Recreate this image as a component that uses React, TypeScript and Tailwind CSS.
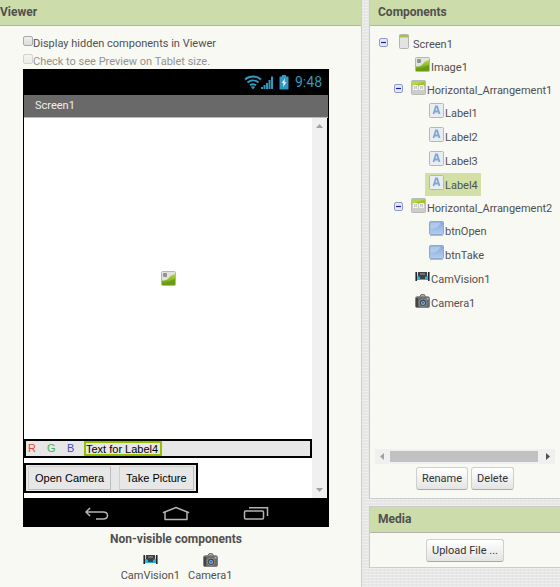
import type { ReactNode } from "react";

const LINEN =
  "bg-[#e7e7e7] bg-[repeating-linear-gradient(0deg,rgba(255,255,255,0.35)_0_1px,transparent_1px_3px),repeating-linear-gradient(90deg,rgba(0,0,0,0.02)_0_1px,transparent_1px_4px)]";

function ScreenIcon() {
  return (
    <svg width="10" height="15" viewBox="0 0 10 15" className="shrink-0">
      <rect x="0.5" y="0.5" width="9" height="14" rx="1" fill="#e3e3e3" stroke="#b4b4b4" />
      <path d="M0.5 1h9v2.500h-9z" fill="#a4c639" />
    </svg>
  );
}

function ImageIcon() {
  return (
    <svg width="15" height="15" viewBox="0 0 15 15" className="shrink-0">
      <defs>
        <linearGradient id="hill" x1="0" y1="0" x2="0" y2="1">
          <stop offset="0" stopColor="#b5dc3c" />
          <stop offset="1" stopColor="#5f9410" />
        </linearGradient>
      </defs>
      <rect x="0.5" y="0.5" width="14" height="14" rx="1" fill="#e2e2e2" stroke="#b5b5b5" />
      <path d="M1 9.500C5 10 7 8.500 9 5.500c1.500-1.500 3-2 5-2.500v11H1z" fill="url(#hill)" />
      <path d="M1 12c5 0 8-2 13-4v6H1z" fill="#6a9c12" />
      <rect x="2" y="2" width="4" height="4" rx="1" fill="#929292" />
    </svg>
  );
}

function ArrangementIcon() {
  return (
    <svg width="15" height="15" viewBox="0 0 15 15" className="shrink-0">
      <rect x="0.5" y="0.5" width="14" height="14" rx="1" fill="#cdcdcb" stroke="#bababa" />
      <path d="M1 1h13v5H1z" fill="#a0c52f" />
      <path d="M1 1h13L1 6z" fill="#b5d552" />
      <rect x="2" y="5" width="5" height="5" rx="1" fill="#f4f4f4" />
      <rect x="8" y="5" width="5" height="5" rx="1" fill="#f4f4f4" />
      <path d="M3 6h3v3H3zM9 6h3v3H9z" fill="#c6c9be" />
      <path d="M4 6h1v3H4zM10 6h1v3h-1z" fill="#dddfd8" />
    </svg>
  );
}

function LabelIcon() {
  return (
    <svg width="15" height="15" viewBox="0 0 15 15" className="shrink-0">
      <rect x="0.5" y="0.5" width="14" height="14" rx="1" fill="#e9edf2" stroke="#b4b8bc" />
      <path d="M4.500 11L6.900 3.500h1.200l2.400 7.500M5.400 8.500h4.200" fill="none" stroke="#83a5d2" strokeWidth="1.800" />
    </svg>
  );
}

function ButtonIcon() {
  return (
    <svg width="15" height="15" viewBox="0 0 15 15" className="shrink-0">
      <defs>
        <linearGradient id="btn" x1="0" y1="0" x2="0" y2="1">
          <stop offset="0" stopColor="#86aadb" />
          <stop offset="1" stopColor="#b3cdee" />
        </linearGradient>
      </defs>
      <rect x="0.5" y="0.5" width="14" height="13" rx="1" fill="url(#btn)" stroke="#8faacb" />
      <path d="M1.500 1.500h10c-2 5-6 6-10 6.500z" fill="#c4d7f0" opacity="0.6" />
      <path d="M1 14.500h13" stroke="#b8bcc2" />
    </svg>
  );
}

function VisionIcon() {
  return (
    <svg width="15" height="11" viewBox="0 0 15 11" className="shrink-0">
      <path d="M2 5h11v4H2z" fill="#25b5e0" />
      <path d="M3 1h9v4l-2 1v2H5V6L3 5z" fill="#3f4143" />
      <path d="M5 2h5v2H5z" fill="#6d7375" />
      <path d="M0 1h1v9H0zM14 1h1v9h-1z" fill="#7c8082" />
      <path d="M1 1h1v9H1zM13 1h1v9h-1z" fill="#22262a" />
      <path d="M2 2h1v3H2zM12 2h1v3h-1z" fill="#cbd5d6" />
    </svg>
  );
}

function CameraIcon() {
  return (
    <svg width="15" height="14" viewBox="0 0 15 14" className="shrink-0">
      <path d="M4.500 3L6 0.700h3.500L10.500 3" fill="#bbb" stroke="#666" />
      <rect x="0.5" y="2.800" width="14" height="10.700" rx="1.500" fill="#6a6a6a" stroke="#808080" />
      <path d="M1 4h2v9H1z" fill="#444" />
      <circle cx="8" cy="8.800" r="3.800" fill="#44484e" stroke="#8e8e8e" />
      <circle cx="8" cy="9" r="2" fill="#7fb5e8" />
      <circle cx="8" cy="8.700" r="1" fill="#2f67ae" />
      <path d="M11.500 4h2v1.500h-2z" fill="#bbb" />
    </svg>
  );
}

function Collapse({ name }: { name: string }) {
  return (
    <button type="button" aria-label={`Collapse ${name}`} className="mt-[5px] h-[9px] w-[9px] shrink-0">
      <svg width="9" height="9" viewBox="0 0 9 9">
        <rect x="0.5" y="0.5" width="8" height="8" rx="1.500" fill="#e6e8f8" stroke="#8f9ccb" />
        <path d="M2 4.500h5" stroke="#20209c" strokeWidth="1.200" />
      </svg>
    </button>
  );
}

function Branch({ name, icon, gap }: { name: string; icon: ReactNode; gap: "wide" | "narrow" }) {
  return (
    <div className={`flex h-[22px] items-start ${gap === "wide" ? "gap-[11px]" : "gap-2"}`}>
      <Collapse name={name} />
      <div className={`flex items-start ${gap === "wide" ? "gap-1" : "gap-px"}`}>
        <span className="mt-px">{icon}</span>
        <span className="pt-1 leading-4">{name}</span>
      </div>
    </div>
  );
}

function Leaf({ name, icon, indent, selected }: { name: string; icon: ReactNode; indent: string; selected?: boolean }) {
  return (
    <div className={`flex h-6 pb-px ${indent}`}>
      <div className={`flex items-start gap-px pl-1 pr-[3px] ${selected ? "bg-[#d2e0a6]" : ""}`}>
        <span className="mt-[2px] flex h-[15px] items-center">{icon}</span>
        <span className="pt-[5px] leading-4">{name}</span>
      </div>
    </div>
  );
}

function Header({ children, pad }: { children: ReactNode; pad?: string }) {
  return (
    <h2 className={`h-[26px] border-b border-[#b0b5a5] bg-[#ccdcaa] text-[12px] leading-[24px] font-bold ${pad ?? ""}`}>
      {children}
    </h2>
  );
}

function PanelButton({ children }: { children: ReactNode }) {
  return (
    <button
      type="button"
      className="h-[23px] rounded-[3px] border border-[#cfcfcf] border-b-[#aaa] bg-linear-to-b from-white to-[#e4e4e4] px-[5px] leading-[20px] text-[#333]"
    >
      {children}
    </button>
  );
}

function Check({ label, disabled }: { label: string; disabled?: boolean }) {
  return (
    <label className={`flex h-[18px] items-start ${disabled ? "text-[#929390]" : ""}`}>
      <input
        type="checkbox"
        disabled={disabled}
        className="h-[10px] w-[10px] appearance-none rounded-[2px] border border-[#a9a9a9] bg-linear-to-b from-[#eee] to-[#ddd] disabled:border-[#d2d2d0] disabled:from-[#f3f3f0] disabled:to-[#ebebe8]"
      />
      <span className="leading-4">{label}</span>
    </label>
  );
}

function StatusBar() {
  return (
    <div className="flex h-[26px] items-center justify-end bg-black pr-[7px] text-[#3298bf]">
      <svg width="30" height="15" viewBox="0 0 30 15">
        <g fill="none" stroke="#3298bf" strokeWidth="2">
          <path d="M1 4.500C5.500 0.500 12.500 0.500 17 4.500" />
          <path d="M3.500 7.500c3.300-2.800 7.700-2.800 11 0" />
          <path d="M6 10.300c2-1.500 4-1.500 6 0" />
        </g>
        <path d="M6.800 11.800q2.200-1.300 4.400 0L9 14.500z" fill="#3298bf" />
        <path d="M17 12h2v2h-2zM19.500 10h2v4h-2zM22 8h2v6h-2zM24.500 5h2v9h-2zM27 1.500h2V14h-2z" fill="#3298bf" />
      </svg>
      <svg width="10" height="15" viewBox="0 0 10 15" className="ml-[5px]">
        <path d="M3 0h4v1.500h2.500V14.500H0.500V1.500H3z" fill="#3298bf" />
        <path d="M6 3.500L2.500 8h2L4 12l3.500-4.700h-2z" fill="#e6f4fa" />
      </svg>
      <span className="ml-[6px] text-[14px] leading-[26px]">9:48</span>
    </div>
  );
}

function NavBar() {
  return (
    <div className="flex h-[29px] items-center justify-between bg-black pt-px pl-[61px] pr-[60px]">
      <svg width="25" height="15" viewBox="0 0 25 15" fill="none" stroke="#b4b4b4" strokeWidth="1.500">
        <path d="M6 2L2 6l4 4M2 6h17q4.500 0 4.500 3.500T19 13h-7" />
      </svg>
      <svg width="28" height="15" viewBox="0 0 28 15" fill="none" stroke="#b4b4b4" strokeWidth="1.500">
        <path d="M1.500 6.500L14 1.500l12.500 5H25V13.500H3V6.500z" strokeLinejoin="round" />
      </svg>
      <svg width="26" height="15" viewBox="0 0 26 15" fill="none" stroke="#b4b4b4" strokeWidth="1.500">
        <rect x="1.500" y="5" width="19" height="8" rx="1" />
        <path d="M6 1.700h18.500V10" />
      </svg>
    </div>
  );
}

function PhoneButton({ children }: { children: ReactNode }) {
  return (
    <button type="button" className="h-6 border border-[#bdbdbd] border-t-[#d0d0d0] border-l-[#d0d0d0] bg-[#e7e7e7] px-[6px]">
      {children}
    </button>
  );
}

function Phone() {
  return (
    <div className="w-[306px] bg-black">
      <StatusBar />
      <div className="mx-px h-[23px] border-b border-[#bbb] bg-[#696969] pl-[11px] leading-[21px] text-[#eee]">
        Screen1
      </div>
      <div className="ml-px mr-[2px] flex h-[380px] bg-white">
        <div className="flex flex-1 flex-col font-['Liberation_Sans',Arial,sans-serif] text-[11px] text-black">
          <div className="flex flex-1 items-center justify-center">
            <ImageIcon />
          </div>
          <div className="flex h-[19px] items-center border-2 border-black bg-[#e7e7e7] pl-[2px]">
            <span className="w-[19px] text-[#f04438]">R</span>
            <span className="w-[20px] text-[#4caf50]">G</span>
            <span className="w-[17px] text-[#3f51b5]">B</span>
            <span className="h-[15px] border-2 border-[#92c000] pr-[2px] leading-[13px]">Text for Label4</span>
          </div>
          <div className="mt-[5px] mb-[5px] flex h-[30px] items-center gap-2 self-start border-2 border-black bg-[#e7e7e7] px-[2px]">
            <PhoneButton>Open Camera</PhoneButton>
            <PhoneButton>Take Picture</PhoneButton>
          </div>
        </div>
        <div className="flex w-[15px] flex-col items-center justify-between bg-[#f0f0f0] py-[6px]">
          <svg width="7" height="4" viewBox="0 0 7 4" fill="#a3a3a3"><path d="M3.500 0L7 4H0z" /></svg>
          <svg width="7" height="4" viewBox="0 0 7 4" fill="#a3a3a3"><path d="M0 0h7L3.500 4z" /></svg>
        </div>
      </div>
      <NavBar />
    </div>
  );
}

const labels = ["Label1", "Label2", "Label3", "Label4"];

export default function App() {
  return (
    <main className={`flex min-h-screen font-[Roboto,sans-serif] text-[11px] text-[#505050] ${LINEN}`}>
      <section className="flex-1 border-r border-[#ccc] bg-[#f8f9f3]">
        <Header>Viewer</Header>
        <div className="ml-[23px] w-[306px] pt-[10px]">
          <Check label="Display hidden components in Viewer" />
          <Check label="Check to see Preview on Tablet size." disabled />
          <div className="-mt-[3px]">
            <Phone />
          </div>
          <h3 className="mt-1 text-center text-[12px] leading-4 font-bold">Non-visible components</h3>
          <div className="mt-[5px] flex justify-center gap-2 pl-px text-center leading-4">
            <div className="flex flex-col items-center gap-px">
              <span className="flex h-[15px] items-center"><VisionIcon /></span>
              CamVision1
            </div>
            <div className="flex flex-col items-center gap-px">
              <span className="flex h-[15px] items-center"><CameraIcon /></span>
              Camera1
            </div>
          </div>
        </div>
      </section>
      <aside className="ml-[7px] flex w-[191px] flex-col gap-[7px]">
        <section className="h-[499px] border-b border-l border-[#ccc] bg-[#f8f9f3]">
          <Header pad="pl-2">Components</Header>
          <div className="mx-[5px] flex h-[464px] flex-col">
            <div className="flex-1 pt-[7px]">
              <div className="pl-1"><Branch name="Screen1" icon={<ScreenIcon />} gap="wide" /></div>
              <Leaf name="Image1" icon={<ImageIcon />} indent="pl-9" />
              <div className="pl-[19px]"><Branch name="Horizontal_Arrangement1" icon={<ArrangementIcon />} gap="narrow" /></div>
              {labels.map((name) => (
                <Leaf key={name} name={name} icon={<LabelIcon />} indent="pl-[50px]" selected={name === "Label4"} />
              ))}
              <div className="pl-[19px]"><Branch name="Horizontal_Arrangement2" icon={<ArrangementIcon />} gap="narrow" /></div>
              <Leaf name="btnOpen" icon={<ButtonIcon />} indent="pl-[50px]" />
              <Leaf name="btnTake" icon={<ButtonIcon />} indent="pl-[50px]" />
              <Leaf name="CamVision1" icon={<VisionIcon />} indent="pl-9" />
              <Leaf name="Camera1" icon={<CameraIcon />} indent="pl-9" />
            </div>
            <div className="flex h-[15px] items-center gap-[6px] bg-[#f0f0f0] px-[5px]">
              <svg width="4" height="7" viewBox="0 0 4 7" fill="#a3a3a3"><path d="M4 0v7L0 3.500z" /></svg>
              <div className="h-[11px] flex-1 bg-[#c1c1c1]" />
              <svg width="6" height="7" viewBox="0 0 6 7" fill="#505050"><path d="M2 0v7l4-3.500z" /></svg>
            </div>
            <div className="mt-[3px] flex justify-center gap-[3px]">
              <PanelButton>Rename</PanelButton>
              <PanelButton>Delete</PanelButton>
            </div>
          </div>
        </section>
        <section className="border border-r-0 border-[#ccc] bg-[#f8f9f3] pb-[5px]">
          <Header pad="pl-2">Media</Header>
          <div className="mt-[6px] flex justify-center">
            <PanelButton>Upload File ...</PanelButton>
          </div>
        </section>
      </aside>
    </main>
  );
}
